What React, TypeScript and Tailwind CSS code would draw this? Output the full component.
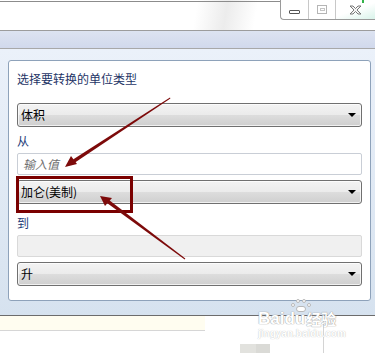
import React from 'react';

const font = { fontFamily: '"Noto Sans CJK SC", "Noto Sans", sans-serif' };

function SelectBox({ value }: { value: string }) {
  return (
    <div className="flex h-[24px] items-center justify-between rounded-[3px] border border-[#707070] bg-[linear-gradient(to_bottom,#f3f3f3_0%,#ebebeb_50%,#dddddd_50%,#cfcfcf_100%)] pl-[3px] pr-[5px] shadow-[inset_0_0_0_1px_rgba(255,255,255,0.7)]">
      <span className="text-[12px] leading-none text-black">{value}</span>
      <span className="h-0 w-0 border-x-[4px] border-t-[4px] border-x-transparent border-t-black" />
    </div>
  );
}

const wmShadow = { textShadow: '0 0 1px #9a9a9a, 0 0 1px #9a9a9a' };

export default function App() {
  return (
    <div className="relative flex h-[353px] w-[375px] flex-col overflow-hidden bg-white" style={font}>
      {/* title bar */}
      <div className="relative h-[31px] shrink-0 border-b border-[#9c9c9c] bg-[linear-gradient(100deg,#ffffff_0%,#ffffff_52%,#ececec_60%,#ffffff_68%,#ffffff_100%)]">
        <div className="absolute left-0 right-[95px] top-[1px] h-px bg-[#8c8c8c]" />
        <div className="absolute right-0 top-0 flex h-[20px] w-[95px] rounded-bl-[4px] border-b border-l border-[#9a9a9a] bg-white">
          <div className="flex w-[28px] items-center justify-center border-r border-[#c8c8c8]">
            <div className="mt-[4px] h-[4px] w-[11px] rounded-[1px] border border-[#555]" />
          </div>
          <div className="flex w-[27px] items-center justify-center border-r border-[#c8c8c8]">
            <div className="flex h-[9px] w-[10px] items-center justify-center border border-[#b5b5b5]">
              <div className="h-[3px] w-[5px] border border-[#c5c5c5]" />
            </div>
          </div>
          <div className="relative flex flex-1 items-center justify-center bg-[linear-gradient(160deg,#ffffff_50%,#d9f3ea_100%)]">
            <svg width="13" height="10" viewBox="0 0 13 10">
              <path
                d="M1 1h3l2.5 2.5L9 1h3L8 5l4 4H9L6.5 6.5 4 9H1l4-4z"
                fill="#f4f4f4"
                stroke="#6a6a6a"
                strokeWidth="0.9"
                strokeLinejoin="round"
              />
            </svg>
            <div className="absolute right-[11px] top-0 h-[3px] w-[2px] bg-[#33b34a]" />
          </div>
        </div>
      </div>

      {/* band */}
      <div className="h-[18px] shrink-0 border-b border-[#a8a8a8] bg-[linear-gradient(to_bottom,#dde3f1,#d1d9ec)]" />

      {/* dialog area */}
      <div className="flex h-[267px] shrink-0 flex-col border-b border-[#6c6c6c] bg-[linear-gradient(to_bottom,#ebf1fa,#d6e2ef)] pl-[8px] pr-[4px] pt-[11px]">
        <div className="flex h-[241px] flex-col rounded-[3px] border border-[#8ea2ba] bg-white px-[8px] pt-[10px]">
          <div className="h-[16px] text-[12px] leading-[16px] text-[#1e3466]">选择要转换的单位类型</div>
          <div className="mt-[16px]">
            <SelectBox value="体积" />
          </div>
          <div className="mt-[6px] h-[16px] text-[12px] leading-[16px] text-[#1e3c78]">从</div>
          <div className="mt-[4px] flex h-[22px] items-center rounded-[2px] border border-[#c9ced6] bg-white pl-[5px]">
            <span className="text-[12px] italic leading-none text-[#707070]">输入值</span>
          </div>
          <div className="mt-[5px]">
            <SelectBox value="加仑(美制)" />
          </div>
          <div className="mt-[11px] h-[16px] text-[12px] leading-[16px] text-[#1e3c78]">到</div>
          <div className="mt-[4px] h-[22px] rounded-[2px] border border-[#d9d9d9] bg-[#f0f0f0]" />
          <div className="mt-[5px]">
            <SelectBox value="升" />
          </div>
        </div>
      </div>

      {/* bottom strip */}
      <div className="relative flex-1 bg-white">
        <div className="h-[15px] w-[205px] border-b border-[#d6d6d6] bg-[#fffdf0]" />
        <div className="absolute bottom-0 left-[323px] top-[2px] w-px bg-[#d4d4d4]" />
        <div className="absolute bottom-0 left-[240px] h-[9px] w-[16px] bg-[#e2e2de]" />
        <div className="absolute bottom-0 left-[256px] h-[9px] w-[14px] bg-[#dadad6]" />
      </div>

      {/* watermark */}
      <div className="pointer-events-none absolute left-[291px] top-[299px] h-[14px] w-[22px]">
        <div className="absolute left-[5px] top-0 h-[4px] w-[4px] rounded-full border border-[#b8b8b8] bg-white" />
        <div className="absolute left-[11px] top-0 h-[4px] w-[4px] rounded-full border border-[#b8b8b8] bg-white" />
        <div className="absolute left-0 top-[4px] h-[4px] w-[4px] rounded-full border border-[#b8b8b8] bg-white" />
        <div className="absolute left-[16px] top-[4px] h-[4px] w-[4px] rounded-full border border-[#b8b8b8] bg-white" />
        <div className="absolute left-[5px] top-[7px] h-[6px] w-[10px] rounded-full border border-[#b8b8b8] bg-white" />
      </div>
      <div className="pointer-events-none absolute left-[258px] top-[310px] flex flex-col items-start">
        <div className="flex items-center">
          <span
            className="text-[17px] font-bold leading-none text-white"
            style={{ fontFamily: '"Liberation Sans", sans-serif', ...wmShadow }}
          >
            Baidu
          </span>
          <span className="ml-[1px] text-[15px] font-bold leading-none text-white" style={wmShadow}>
            经验
          </span>
        </div>
        <span
          className="mt-[2px] text-[10px] font-bold leading-none text-white"
          style={{ fontFamily: '"Liberation Sans", sans-serif', textShadow: '0 0 1px #b0b0b0' }}
        >
          jingyan.baidu.com
        </span>
      </div>

      {/* annotation box */}
      <div className="pointer-events-none absolute left-[16px] top-[176px] h-[37px] w-[117px] border-[3px] border-[#7a0000]" />

      {/* annotation arrows */}
      <svg className="pointer-events-none absolute left-0 top-0" width="375" height="353" viewBox="0 0 375 353">
        <polygon points="170,97.6 170.4,98.4 75,162.5 73,159.5" fill="#7d0a0a" />
        <polygon points="65,167 71,156 77,164" fill="#7d0a0a" />
        <polygon points="185.3,258.6 184.7,259.4 107,203 109,200" fill="#7d0a0a" />
        <polygon points="100,196 112,198 105,206" fill="#7d0a0a" />
      </svg>
    </div>
  );
}
